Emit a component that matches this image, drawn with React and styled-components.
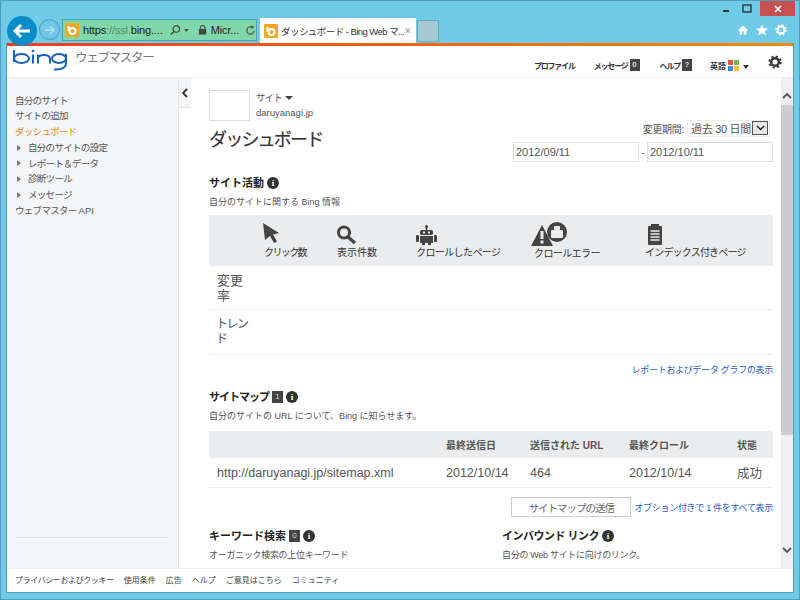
import React from "react";
import styled, { createGlobalStyle } from "styled-components";

const Global = createGlobalStyle`
  html, body { margin: 0; padding: 0; background: #6fcbe8; }
  * { box-sizing: border-box; }
  body { font-family: "Liberation Sans", "Noto Sans CJK JP", sans-serif; color: #555; overflow: hidden; }
`;

const Win = styled.div`
  width: 800px; height: 600px; display: flex; flex-direction: column;
  background: #6fcbe8; border: 1px solid #4f9fba; overflow: hidden;
`;
const TitleBar = styled.div`
  height: 15px; flex: none; display: flex; justify-content: flex-end; align-items: flex-start; padding-right: 4px;
`;
const WinBtn = styled.div`
  width: 21px; height: 15px; display: flex; align-items: center; justify-content: center;
`;
const CloseBtn = styled.div`
  width: 35px; height: 15px; margin-left: 3px; background: #c75050; color: #fff; display: flex; align-items: center; justify-content: center;
  svg { display: block; }
`;
const Toolbar = styled.div`
  height: 27px; flex: none; display: flex; align-items: flex-end; padding-left: 6px; position: relative;
`;
const BackBtn = styled.div`
  width: 30px; height: 30px; border-radius: 50%; background: #0a8ec9; flex: none; margin-bottom: -3px;
  display: flex; align-items: center; justify-content: center; position: relative; z-index: 1;
`;
const FwdBtn = styled.div`
  width: 21px; height: 21px; border-radius: 50%; border: 1px solid #3f9dc4; background: #72c6e4; flex: none;
  margin: 0 2px 3px 2px; display: flex; align-items: center; justify-content: center;
`;
const Address = styled.div`
  width: 195px; height: 22px; background: #80d7a9; border: 1px solid #4f9fb0; flex: none; margin-bottom: 2px;
  display: flex; align-items: center; padding-left: 2px; font-size: 11px; color: #222; white-space: nowrap;
`;
const Scheme = styled.span`color: #4f8f6a;`;
const AddrText = styled.span`margin-left: 4px; letter-spacing: -0.15px;`;
const Tab = styled.div`
  width: 156px; height: 25px; background: #fff; margin-left: 3px; flex: none; display: flex; align-items: center;
  padding: 0 4px; font-size: 9.5px; color: #333; white-space: nowrap;
`;
const TabText = styled.span`margin-left: 3px; flex: 1; letter-spacing: -0.55px;`;
const TabClose = styled.span`color: #999; font-size: 9px;`;
const NewTab = styled.div`
  width: 22px; height: 22px; background: #a6c8d2; border: 1px solid #64a6ba; flex: none; margin: 0 0 1px 1px;
`;
const ToolIcons = styled.div`
  margin-left: auto; display: flex; gap: 7px; padding: 0 12px 7px 0; align-items: center;
`;

const Page = styled.div`
  flex: 1; margin: 0 5px 6px 5px; background: #fff; display: flex; flex-direction: column; min-height: 0;
  border-bottom: 1px solid #4f9fba; border-left: 1px solid #4f9fba; border-right: 1px solid #4f9fba;
`;
const Strip = styled.div`
  height: 3px; flex: none; background: linear-gradient(90deg, #f03a24, #ee5a14 40%, #f58a00);
`;
const Header = styled.div`
  height: 32px; flex: none; display: flex; align-items: flex-start; padding-left: 6px; border-bottom: 1px solid #ececec; position: relative;
`;
const Logo = styled.svg`margin-top: 3px; flex: none;`;
const Brand = styled.div`font-size: 12.5px; letter-spacing: -1.3px; color: #777; margin: 3px 0 0 6px; line-height: 18px; white-space: nowrap;`;
const HeadNav = styled.div`
  margin-left: auto; display: flex; align-items: flex-start; padding-top: 15px; font-size: 8px; font-weight: 700; color: #333; letter-spacing: -1.2px;
`;
const NavItem = styled.div`
  display: flex; align-items: center; gap: 2px; margin-left: ${p => p.$gap || 0}px; line-height: 12px; white-space: nowrap;
`;
const NavLang = styled.span`letter-spacing: 0;`;
const NavBadge = styled.span`
  background: #444; color: #ddd; width: 10px; height: 12px; font-size: 8px; letter-spacing: 0; display: inline-flex; align-items: center; justify-content: center; margin-top: -4px;
`;
const Gear = styled.svg`margin: -6px 11px 0 18px; flex: none;`;

const Body = styled.div`flex: 1; display: flex; min-height: 0;`;
const Sidebar = styled.div`
  width: 172px; flex: none; background: #f4f5f7; border-right: 1px solid #e4e4e4; padding: 14.5px 8px 0; font-size: 9.5px; letter-spacing: -0.7px; color: #555; position: relative;
`;
const SideRow = styled.div`
  height: 15.75px; line-height: 15.75px; color: ${p => p.$active ? "#f58220" : "#555"}; white-space: nowrap; display: flex; align-items: center;
`;
const SideLatin = styled.span`letter-spacing: 0;`;
const Caret = styled.span`
  width: 0; height: 0; border-left: 4px solid #777; border-top: 3px solid transparent; border-bottom: 3px solid transparent; margin: 0 7px 0 2px;
`;
const SideRule = styled.div`
  position: absolute; left: 8px; right: 10px; top: 459px; height: 1px; background: #e2e2e2;
`;
const Collapse = styled.div`
  width: 14px; height: 30px; flex: none; background: linear-gradient(90deg, #f4f5f7 12px, #fff 12px); border-bottom: 1px solid #e8e8e8; display: flex; align-items: center; padding-left: 2px;
`;
const Main = styled.div`
  flex: 1; min-width: 0; overflow: hidden; padding: 12px 8px 0 16px; height: 100%;
`;
const SiteRow = styled.div`display: flex; height: 31px;`;
const SiteBox = styled.div`width: 41px; height: 31px; border: 1px solid #ddd; flex: none;`;
const SiteMeta = styled.div`margin-left: 6px; font-size: 9.5px; color: #555; line-height: 15px;`;
const SiteLabel = styled.div`letter-spacing: -0.9px;`;
const SiteArrow = styled.span`
  display: inline-block; width: 0; height: 0; border-left: 4px solid transparent; border-right: 4px solid transparent; border-top: 4px solid #444; margin: 0 0 1px 3px;
`;
const TopRow = styled.div`display: flex; justify-content: space-between; height: 57px;`;
const H1 = styled.h1`font-size: 18px; letter-spacing: -1.8px; font-weight: 400; color: #333; margin: 7px 0 0; line-height: 24px; -webkit-text-stroke: 0.2px #333; white-space: nowrap;`;
const RangeCol = styled.div`display: flex; flex-direction: column; align-items: flex-end; margin-top: -2px;`;
const RangeRow = styled.div`display: flex; align-items: center; font-size: 10px; letter-spacing: -0.3px; color: #555; height: 18px; margin-right: 3px; white-space: nowrap;`;
const RangeSel = styled.div`
  width: 83px; height: 17px; border: 1px solid #ececec; margin-left: 3px; display: flex; align-items: center; font-size: 11px; letter-spacing: -0.3px; color: #555; padding-left: 3px; padding-right: 1px; justify-content: space-between; white-space: nowrap;
`;
const SelBtn = styled.span`
  width: 16px; height: 14px; border: 1px solid #555; background: #e8e8e8; display: flex; align-items: center; justify-content: center; flex: none;
`;
const DateRow = styled.div`display: flex; align-items: center; margin-top: 5px; font-size: 11px; color: #777;`;
const DateBox = styled.div`
  width: 126px; height: 20px; border: 1px solid #ddd; font-size: 11px; color: #555; padding-left: 2px; line-height: 18px;
`;
const DateDash = styled.span`width: 8px; text-align: center;`;
const H2 = styled.h2`
  margin: ${p => p.$top || 0}px 0 0; font-size: 11px; font-weight: 700; color: #222; line-height: 14px; display: flex; align-items: center; gap: 3px; white-space: nowrap;
`;
const H2Text = styled.span`letter-spacing: ${p => p.$ls || 0}px;`;
const Info = styled.span`
  width: 12px; height: 12px; border-radius: 50%; background: #333; color: #fff; font-size: 9px; font-weight: 700; display: inline-flex; align-items: center; justify-content: center; font-family: "Liberation Serif", serif;
`;
const Count = styled.span`
  width: 11px; height: 12px; background: #444; color: #ddd; font-size: 8px; font-weight: 400; display: inline-flex; align-items: center; justify-content: center;
`;
const Desc = styled.div`font-size: 9px; color: #555; line-height: 12px; margin-top: 6px; white-space: nowrap; letter-spacing: ${p => p.$ls || 0}px;`;
const ActivityHead = styled.div`
  display: flex; background: #ebecee; height: 51px; margin-top: 7px; padding-left: 53px;
`;
const ActivityCell = styled.div`
  width: ${p => p.$w}px; flex: none; display: flex; flex-direction: column; align-items: flex-start; font-size: 10px; color: #333; white-space: nowrap; padding-top: ${p => p.$pt}px; position: relative;
`;
const ActLabel = styled.span`margin-left: ${p => p.$ml || 0}px; margin-top: ${p => p.$mt || 0}px; line-height: 13px; letter-spacing: ${p => p.$ls || 0}px;`;
const RowBlock = styled.div`
  height: ${p => p.$h}px; border-bottom: 1px solid #eee; font-size: ${p => p.$size}px; letter-spacing: ${p => p.$ls || 0}px; line-height: 15px; color: #555; padding: 7px 0 0 ${p => p.$pl}px;
`;
const LinkRow = styled.div`
  display: flex; justify-content: flex-end; align-items: center; gap: 3px; font-size: 9px; letter-spacing: -0.3px; color: #1a5fc8; white-space: nowrap; margin-top: ${p => p.$top}px; line-height: 13px;
`;
const SitemapTable = styled.div`margin-top: 9px;`;
const SmHead = styled.div`
  display: grid; grid-template-columns: 237px 84px 99px 108px 1fr; background: #ebecee; height: 27px; align-items: center; font-size: 10px; font-weight: 700; color: #555; white-space: nowrap;
`;
const SmRow = styled.div`
  display: grid; grid-template-columns: 237px 84px 99px 108px 1fr; height: 30px; align-items: center; font-size: 12.5px; color: #555; border-bottom: 1px solid #eee; white-space: nowrap;
`;
const SmCellFirst = styled.span`padding-left: 8px;`;
const SmAct = styled.div`display: flex; justify-content: flex-end; align-items: center; margin-top: 9px; height: 20px; font-size: 9px; letter-spacing: -0.3px; color: #1a5fc8; white-space: nowrap;`;
const SmBtn = styled.div`
  width: 120px; height: 20px; border: 1px solid #ccc; font-size: 10.5px; letter-spacing: -1px; color: #666; display: flex; align-items: center; justify-content: center; margin-right: 3px;
`;
const Columns = styled.div`display: grid; grid-template-columns: 293px 1fr; margin-top: 12px;`;
const Scroll = styled.div`
  width: 12px; flex: none; background: #f0f0f0; display: flex; flex-direction: column; align-items: center; height: 100%;
`;
const ScrollArrow = styled.div`height: 27px; flex: none; display: flex; align-items: center; justify-content: center; padding-top: 7px;`;
const ScrollThumb = styled.div`height: 330px; width: 100%; background: #cdcdcd; flex: none;`;
const ScrollEnd = styled.div`margin-top: auto; height: 36px; display: flex; align-items: center; justify-content: center;`;
const Footer = styled.div`
  height: 24px; flex: none; display: flex; gap: 10px; align-items: center; padding: 0 0 2px 8px; font-size: 8px; color: #444; border-top: 1px solid #eee; white-space: nowrap;
`;
const FootFirst = styled.span`letter-spacing: -0.4px;`;

const BingTile = () => (
  <svg width="14" height="14" viewBox="0 0 14 14" style={{ flex: "none" }}>
    <rect width="14" height="14" rx="1" fill="#f5a623" />
    <circle cx="7.5" cy="8" r="3" fill="none" stroke="#fff" strokeWidth="2" />
    <path d="M3.5 3v5" stroke="#fff" strokeWidth="2" />
  </svg>
);

const InfoI = () => <Info>i</Info>;

export default function App() {
  return (
    <>
      <Global />
      <Win>
        <TitleBar>
          <WinBtn><svg width="8" height="8"><rect x="1" y="5" width="6" height="2" fill="#333" /></svg></WinBtn>
          <WinBtn><svg width="10" height="9"><rect x="1" y="1" width="8" height="7" fill="none" stroke="#333" strokeWidth="1.4" /></svg></WinBtn>
          <CloseBtn><svg width="8" height="8"><path d="M1 1l6 6M7 1l-6 6" stroke="#fff" strokeWidth="1.6" /></svg></CloseBtn>
        </TitleBar>
        <Toolbar>
          <BackBtn>
            <svg width="18" height="16" viewBox="0 0 18 16"><path d="M8 2L2 8l6 6M2 8h15" fill="none" stroke="#fff" strokeWidth="3" /></svg>
          </BackBtn>
          <FwdBtn>
            <svg width="12" height="12" viewBox="0 0 12 12"><path d="M6 2l4 4-4 4M10 6H1" fill="none" stroke="#bfe3f0" strokeWidth="1.4" /></svg>
          </FwdBtn>
          <Address>
            <BingTile />
            <AddrText>https<Scheme>://ssl.</Scheme>bing....</AddrText>
            <svg width="14" height="12" viewBox="0 0 14 12" style={{ marginLeft: 6 }}><circle cx="8" cy="5" r="3.5" fill="none" stroke="#444" strokeWidth="1.3" /><path d="M5.5 7.5L2 11" stroke="#444" strokeWidth="1.5" /></svg>
            <svg width="8" height="6" style={{ marginLeft: 2 }}><path d="M1 2h5L3.5 5z" fill="#555" /></svg>
            <svg width="10" height="12" viewBox="0 0 10 12" style={{ marginLeft: 7 }}><path d="M2.5 5V3.5a2.5 2.5 0 0 1 5 0V5" fill="none" stroke="#444" strokeWidth="1.2" /><rect x="1" y="5" width="8" height="6" fill="#444" /></svg>
            <AddrText>Micr...</AddrText>
            <svg width="12" height="12" viewBox="0 0 12 12" style={{ marginLeft: 6 }}><path d="M10 6.5A4 4 0 1 1 8 3" fill="none" stroke="#555" strokeWidth="1.4" /><path d="M7 .8l3.2 1.8L7 5z" fill="#555" /></svg>
          </Address>
          <Tab>
            <BingTile />
            <TabText>ダッシュボード - Bing Web マ...</TabText>
            <TabClose>✕</TabClose>
          </Tab>
          <NewTab />
          <ToolIcons>
            <svg width="12" height="12" viewBox="0 0 14 13"><path d="M7 1L1 7h2v5h3V8h2v4h3V7h2z" fill="#fff" /></svg>
            <svg width="12" height="12" viewBox="0 0 14 13"><path d="M7 0l2 4.6 5 .4-3.8 3.2L11.4 13 7 10.4 2.6 13l1.2-4.8L0 5l5-.4z" fill="#fff" /></svg>
            <svg width="12" height="12" viewBox="0 0 14 14"><circle cx="7" cy="7" r="4" fill="none" stroke="#fff" strokeWidth="2.4" /><circle cx="7" cy="7" r="5.8" fill="none" stroke="#fff" strokeWidth="1.8" strokeDasharray="2.2 2.35" /></svg>
          </ToolIcons>
        </Toolbar>
        <Page>
          <Strip />
          <Header>
            <Logo width="56" height="24" viewBox="0 0 56 24">
              <g fill="none" stroke="#1a62c0" strokeWidth="2">
                <path d="M1 1v12" />
                <ellipse cx="8.5" cy="9.5" rx="7.5" ry="4.5" />
                <path d="M20 5.5v9" />
                <path d="M25 14.5V5.5M25 8.5c2-3.5 12-3.5 12 1.5v4.5" />
                <ellipse cx="46" cy="9.5" rx="7" ry="4.5" />
                <path d="M53 5v10c0 4-6 6-12 5.5" />
              </g>
              <circle cx="20" cy="2" r="1.3" fill="#1a62c0" />
            </Logo>
            <Brand>ウェブマスター</Brand>
            <HeadNav>
              <NavItem>プロファイル</NavItem>
              <NavItem $gap={19}>メッセージ<NavBadge>0</NavBadge></NavItem>
              <NavItem $gap={20}>ヘルプ<NavBadge>?</NavBadge></NavItem>
              <NavItem $gap={18}>
                <NavLang>英語</NavLang>
                <svg width="11" height="11" viewBox="0 0 11 11" style={{ marginTop: -3 }}><rect width="5" height="5" fill="#e8563a" /><rect x="6" width="5" height="5" fill="#7ab648" /><rect y="6" width="5" height="5" fill="#3c87d8" /><rect x="6" y="6" width="5" height="5" fill="#f5c02c" /></svg>
                <svg width="8" height="5" style={{ marginLeft: 1 }}><path d="M1 0h6L4 4z" fill="#333" /></svg>
              </NavItem>
              <Gear width="14" height="14" viewBox="0 0 14 14"><circle cx="7" cy="7" r="3.8" fill="none" stroke="#333" strokeWidth="2.4" /><circle cx="7" cy="7" r="5.7" fill="none" stroke="#333" strokeWidth="1.8" strokeDasharray="2.2 2.28" /></Gear>
            </HeadNav>
          </Header>
          <Body>
            <Sidebar>
              <SideRow>自分のサイト</SideRow>
              <SideRow>サイトの追加</SideRow>
              <SideRow $active>ダッシュボード</SideRow>
              <SideRow><Caret />自分のサイトの設定</SideRow>
              <SideRow><Caret />レポート＆データ</SideRow>
              <SideRow><Caret />診断ツール</SideRow>
              <SideRow><Caret />メッセージ</SideRow>
              <SideRow>ウェブマスター&nbsp;<SideLatin>API</SideLatin></SideRow>
              <SideRule />
            </Sidebar>
            <Collapse>
              <svg width="8" height="10" viewBox="0 0 8 10"><path d="M6 1L2 5l4 4" fill="none" stroke="#333" strokeWidth="1.8" /></svg>
            </Collapse>
            <Main>
              <SiteRow>
                <SiteBox />
                <SiteMeta>
                  <SiteLabel>サイト<SiteArrow /></SiteLabel>
                  <div>daruyanagi.jp</div>
                </SiteMeta>
              </SiteRow>
              <TopRow>
                <H1>ダッシュボード</H1>
                <RangeCol>
                  <RangeRow>変更期間:<RangeSel>過去 30 日間<SelBtn><svg width="9" height="6"><path d="M1 1l3.5 3.5L8 1" fill="none" stroke="#222" strokeWidth="1.4" /></svg></SelBtn></RangeSel></RangeRow>
                  <DateRow>
                    <DateBox>2012/09/11</DateBox>
                    <DateDash>-</DateDash>
                    <DateBox>2012/10/11</DateBox>
                  </DateRow>
                </RangeCol>
              </TopRow>
              <H2 $top={-2}><H2Text>サイト活動</H2Text><InfoI /></H2>
              <Desc>自分のサイトに関する Bing 情報</Desc>
              <ActivityHead>
                <ActivityCell $w={74} $pt={7}>
                  <svg width="18" height="22" viewBox="0 0 18 22"><path d="M1 1l16 10-6 1.5 4 7-3 1.5-4-7L3 18z" fill="#444" /></svg>
                  <ActLabel $ml={2} $mt={2} $ls={-1.6}>クリック数</ActLabel>
                </ActivityCell>
                <ActivityCell $w={80} $pt={10}>
                  <svg width="21" height="19" viewBox="0 0 21 19"><circle cx="8" cy="7.5" r="5.5" fill="none" stroke="#444" strokeWidth="3" /><path d="M12 12l7 6" stroke="#444" strokeWidth="3.4" /></svg>
                  <ActLabel $ml={1} $mt={2}>表示件数</ActLabel>
                </ActivityCell>
                <ActivityCell $w={115} $pt={10}>
                  <svg width="21" height="20" viewBox="0 0 21 20"><circle cx="10.5" cy="1.5" r="1.5" fill="#444" /><rect x="9.8" y="2" width="1.4" height="3" fill="#444" /><rect x="4" y="5" width="13" height="5" rx="1.5" fill="#444" /><rect x="7" y="6.5" width="2" height="2" fill="#ebecee" /><rect x="12" y="6.5" width="2" height="2" fill="#ebecee" /><rect x="4" y="11" width="13" height="7" fill="#444" /><rect x="0" y="10" width="3" height="7" rx="1" fill="#444" /><rect x="18" y="10" width="3" height="7" rx="1" fill="#444" /><rect x="6" y="18" width="3" height="2" fill="#444" /><rect x="12" y="18" width="3" height="2" fill="#444" /></svg>
                  <ActLabel $mt={1} $ls={-0.6}>クロールしたページ</ActLabel>
                </ActivityCell>
                <ActivityCell $w={114} $pt={6}>
                  <svg width="36" height="26" viewBox="0 0 36 26"><path d="M11 4L0 25h22z" fill="#444" /><rect x="9.5" y="10" width="3" height="8" fill="#ebecee" /><rect x="9.5" y="19.5" width="3" height="3" fill="#ebecee" /><circle cx="26" cy="11" r="10" fill="#444" /><rect x="20" y="9" width="12" height="8" rx="1" fill="#ebecee" /><rect x="23" y="5" width="6" height="4" rx="1" fill="#ebecee" /></svg>
                  <ActLabel $ml={3} $ls={-0.6}>クロールエラー</ActLabel>
                </ActivityCell>
                <ActivityCell $w={110} $pt={9}>
                  <svg width="14" height="21" viewBox="0 0 14 21" style={{ marginLeft: 3 }}><rect y="2" width="14" height="19" rx="1" fill="#444" /><rect x="3" width="8" height="3" fill="#444" /><path d="M2.5 7h9M2.5 10h9M2.5 13h9M2.5 16h9" stroke="#ebecee" strokeWidth="1.3" /></svg>
                  <ActLabel $mt={1} $ls={-0.8}>インデックス付きページ</ActLabel>
                </ActivityCell>
              </ActivityHead>
              <RowBlock $h={44} $pl={8} $size={13}>変更<br />率</RowBlock>
              <RowBlock $h={45} $pl={7} $size={12} $ls={-1.5}>トレン<br />ド</RowBlock>
              <LinkRow $top={9}>レポートおよびデータ グラフの表示</LinkRow>
              <H2 $top={13}><H2Text $ls={-1}>サイトマップ</H2Text><Count>1</Count><InfoI /></H2>
              <Desc>自分のサイトの URL について、Bing に知らせます。</Desc>
              <SitemapTable>
                <SmHead><span /><span>最終送信日</span><span>送信された URL</span><span>最終クロール</span><span>状態</span></SmHead>
                <SmRow><SmCellFirst>http://daruyanagi.jp/sitemap.xml</SmCellFirst><span>2012/10/14</span><span>464</span><span>2012/10/14</span><span>成功</span></SmRow>
              </SitemapTable>
              <SmAct><SmBtn>サイトマップの送信</SmBtn>オプション付きで 1 件をすべて表示</SmAct>
              <Columns>
                <div>
                  <H2><H2Text>キーワード検索</H2Text><Count>0</Count><InfoI /></H2>
                  <Desc $ls={-0.3}>オーガニック検索の上位キーワード</Desc>
                </div>
                <div>
                  <H2><H2Text $ls={-0.5}>インバウンド リンク</H2Text><InfoI /></H2>
                  <Desc $ls={-0.3}>自分の Web サイトに向けのリンク。</Desc>
                </div>
              </Columns>
            </Main>
            <Scroll>
              <ScrollArrow><svg width="10" height="7"><path d="M1 6l4-4 4 4" fill="none" stroke="#555" strokeWidth="1.8" /></svg></ScrollArrow>
              <ScrollThumb />
              <ScrollEnd><svg width="10" height="7"><path d="M1 1l4 4 4-4" fill="none" stroke="#555" strokeWidth="1.8" /></svg></ScrollEnd>
            </Scroll>
          </Body>
          <Footer>
            <FootFirst>プライバシーおよびクッキー</FootFirst><span>使用条件</span><span>広告</span><span>ヘルプ</span><span>ご意見はこちら</span><span>コミュニティ</span>
          </Footer>
        </Page>
      </Win>
    </>
  );
}
